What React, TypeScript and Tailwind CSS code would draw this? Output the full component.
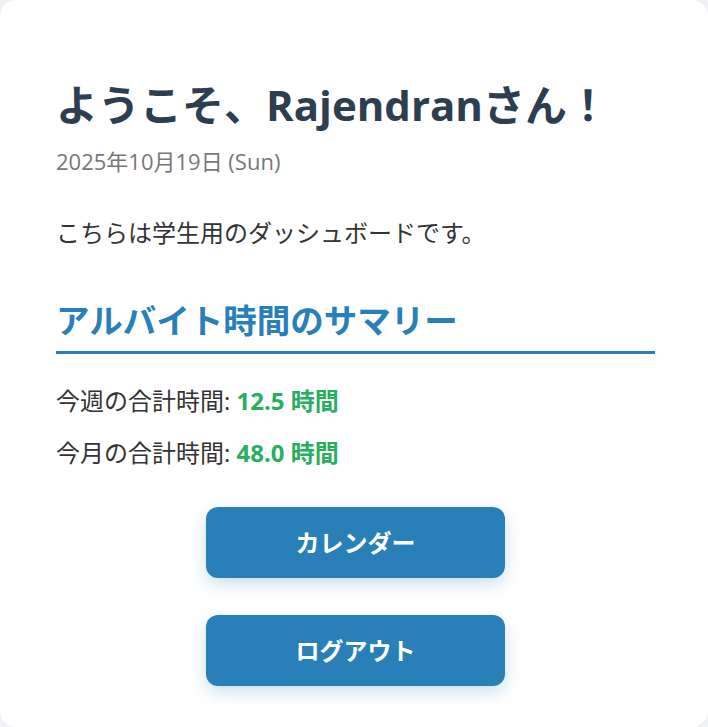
export default function App() {
  return (
    <div
      className="w-[708px] h-[727px] bg-[#f3f5f8] text-[#333]"
      style={{ fontFamily: '"Open Sans", "Noto Sans CJK JP", sans-serif' }}
    >
      <div className="h-full rounded-[16px] bg-white shadow-[0_0_12px_rgba(0,0,0,0.06)] pl-[56px] pr-[53px] pt-[81px]">
        {/* Greeting */}
        <h1 className="text-[42px] leading-[48px] font-bold text-[#2c3e50]">
          ようこそ、Rajendranさん！
        </h1>
        <p className="mt-[16px] text-[22px] leading-[32px] text-[#777]">
          2025年10月19日 (Sun)
        </p>
        <p className="mt-[39px] text-[24px] leading-[34px]">
          こちらは学生用のダッシュボードです。
        </p>

        {/* Summary */}
        <h2 className="mt-[50px] text-[33.5px] leading-[40px] font-bold text-[#2980b9] pb-[11px] border-b-[3px] border-[#2980b9]">
          アルバイト時間のサマリー
        </h2>
        <p className="mt-[30px] text-[24px] leading-[34px]">
          今週の合計時間: <span className="font-bold text-[#27ae60]">12.5 時間</span>
        </p>
        <p className="mt-[18px] text-[24px] leading-[34px]">
          今月の合計時間: <span className="font-bold text-[#27ae60]">48.0 時間</span>
        </p>

        {/* Actions */}
        <div className="mt-[37px] flex flex-col items-center gap-[37px]">
          <button className="w-[299px] h-[71px] rounded-[12px] bg-[#2980b9] text-white text-[24px] font-bold shadow-[0_6px_16px_rgba(41,128,185,0.25)]">
            カレンダー
          </button>
          <button className="w-[299px] h-[71px] rounded-[12px] bg-[#2980b9] text-white text-[24px] font-bold shadow-[0_6px_16px_rgba(41,128,185,0.25)]">
            ログアウト
          </button>
        </div>
      </div>
    </div>
  );
}
